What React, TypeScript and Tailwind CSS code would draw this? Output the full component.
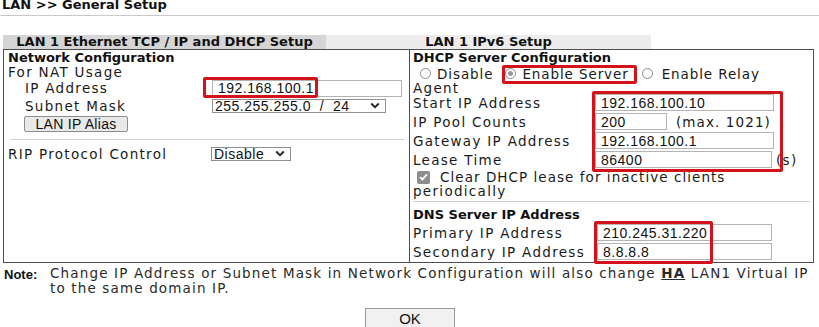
import React, { FC, ReactNode } from "react";

// --- small building blocks ---

const Field: FC<{ value?: string; className: string }> = ({ value, className }) => (
  <div
    className={`flex items-center border border-[#b4b4b4] bg-white pl-[5px] font-['Liberation_Sans',Arial,sans-serif] text-[14px] leading-none tracking-[0.5px] text-[#111] ${className}`}
  >
    {value}
  </div>
);

const Chevron = () => (
  <svg width="10" height="7" viewBox="0 0 10 7" className="shrink-0">
    <path d="M1.2 1.5 5 5.2 8.8 1.5" fill="none" stroke="#222" strokeWidth="1.8" />
  </svg>
);

const Select: FC<{ value: string; className: string }> = ({ value, className }) => (
  <div
    className={`flex items-center justify-between border border-[#8f8f8f] bg-white pl-[2px] pr-[5px] font-['Liberation_Sans',Arial,sans-serif] text-[14px] leading-none tracking-[0.5px] text-[#111] ${className}`}
  >
    <span>{value}</span>
    <Chevron />
  </div>
);

const Radio: FC<{ checked?: boolean }> = ({ checked }) => (
  <span className="flex h-[11px] w-[11px] shrink-0 items-center justify-center rounded-full border border-[#8a8a8a] bg-white">
    {checked && <span className="h-[5px] w-[5px] rounded-full bg-[#9a9a9a]" />}
  </span>
);

const RedBox: FC<{ className: string }> = ({ className }) => (
  <div className={`pointer-events-none absolute rounded-[2px] border-[3px] border-[#d4121a] ${className}`} />
);

const Label: FC<{ children: ReactNode; className?: string; track?: string }> = ({
  children,
  className = "",
  track = "tracking-[1.3px]",
}) => (
  <div
    className={`font-['DejaVu_Sans',Verdana,sans-serif] text-[13.5px] leading-[12px] text-[#1a1a1a] ${track} ${className}`}
  >
    {children}
  </div>
);

const heading =
  "font-['DejaVu_Sans',Verdana,sans-serif] text-[13px] font-bold leading-[12px] text-[#111]";

// --- main ---

export default function App() {
  return (
    <div className="relative h-[327px] w-[819px] overflow-hidden bg-white">
      {/* page title */}
      <div className="h-[18px] border-b border-[#c9c9c9]">
        <div className="mt-[-2px] pl-[2px] font-['DejaVu_Sans',Verdana,sans-serif] text-[13px] font-bold leading-[13px] text-[#111]">
          LAN &gt;&gt; General Setup
        </div>
      </div>

      {/* tabs */}
      <div className="mt-[19px] flex h-[14px] pl-[3px]">
        <div className={`flex w-[323px] items-center justify-center bg-[#d5d5d5] ${heading}`}>
          LAN 1 Ethernet TCP / IP and DHCP Setup
        </div>
        <div className={`flex w-[325px] items-center justify-center bg-[#ececec] ${heading}`}>
          LAN 1 IPv6 Setup
        </div>
      </div>

      {/* panel */}
      <div className="relative ml-[3px] flex h-[214px] w-[811px] border border-[#4d4d4d]">
        {/* left column */}
        <div className="w-[406px] border-r border-[#4d4d4d] pl-[4px]">
          <div className={`flex h-[15px] items-center ${heading}`}>Network Configuration</div>
          <Label className="flex h-[14px] items-center">For NAT Usage</Label>
          <div className="flex h-[18px] items-center">
            <Label className="w-[204px] pl-[17px]">IP Address</Label>
            <Field value="192.168.100.1" className="h-[17px] w-[190px]" />
          </div>
          <div className="flex h-[17px] items-center">
            <Label className="w-[204px] pl-[17px]">Subnet Mask</Label>
            <Select value={"255.255.255.0\u00a0\u00a0/\u00a0\u00a024"} className="h-[14px] w-[174px]" />
          </div>
          <div className="h-[19px] pl-[16px] pt-[2px]">
            <button className="flex h-[16px] w-[104px] items-center justify-center rounded-[2px] border border-[#8c8c8c] bg-[#e9e9e9] font-['Liberation_Sans',Arial,sans-serif] text-[14px] leading-none tracking-[0.3px] text-[#111]">
              LAN IP Alias
            </button>
          </div>
          <div className="ml-[3px] mr-[5px] mt-[6px] border-t border-[#cfcfcf]" />
          <div className="mt-[6px] flex h-[15px] items-center">
            <Label className="w-[203px]">RIP Protocol Control</Label>
            <Select value="Disable" className="h-[14px] w-[80px]" />
          </div>
        </div>

        {/* right column */}
        <div className="flex-1 pl-[3px]">
          <div className={`flex h-[15px] items-center ${heading}`}>DHCP Server Configuration</div>
          <div className="flex h-[17px] items-center pl-[7px]">
            <Radio />
            <Label className="ml-[6px]" track="tracking-[0.9px]">
              Disable
            </Label>
            <span className="ml-[12px]">
              <Radio checked />
            </span>
            <Label className="ml-[6px]" track="tracking-[0.9px]">
              Enable Server
            </Label>
            <span className="ml-[13px]">
              <Radio />
            </span>
            <Label className="ml-[9px]" track="tracking-[0.9px]">
              Enable Relay
            </Label>
          </div>
          <Label className="flex h-[12px] items-center">Agent</Label>

          <div className="flex h-[19px] items-start">
            <Label className="flex h-[17px] w-[182px] items-center">Start IP Address</Label>
            <Field value="192.168.100.10" className="h-[17px] w-[179px]" />
          </div>
          <div className="flex h-[19px] items-start">
            <Label className="flex h-[17px] w-[182px] items-center">IP Pool Counts</Label>
            <Field value="200" className="h-[17px] w-[72px]" />
            <Label className="ml-[9px] flex h-[17px] items-center" track="tracking-[1.1px]">
              (max. 1021)
            </Label>
          </div>
          <div className="flex h-[19px] items-start">
            <Label className="flex h-[17px] w-[182px] items-center">Gateway IP Address</Label>
            <Field value="192.168.100.1" className="h-[17px] w-[179px]" />
          </div>
          <div className="flex h-[19px] items-start">
            <Label className="flex h-[17px] w-[182px] items-center">Lease Time</Label>
            <Field value="86400" className="h-[17px] w-[177px]" />
            <Label className="ml-[4px] flex h-[17px] items-center">(s)</Label>
          </div>

          <div className="flex h-[14px] items-center pl-[4px]">
            <span className="flex h-[13px] w-[13px] items-center justify-center rounded-[2px] bg-[#8d8d8d]">
              <svg width="9" height="8" viewBox="0 0 9 8">
                <path d="M1 4.2 3.4 6.4 8 1.4" fill="none" stroke="#fff" strokeWidth="1.8" />
              </svg>
            </span>
            <Label className="ml-[10px]" track="tracking-[1.05px]">
              Clear DHCP lease for inactive clients
            </Label>
          </div>
          <Label className="flex h-[13px] items-center">periodically</Label>
          <div className="mr-[3px] mt-[4px] border-t border-[#cfcfcf]" />

          <div className={`mt-[5px] flex h-[16px] items-center ${heading}`}>DNS Server IP Address</div>
          <div className="flex h-[19px] items-start pt-[1px]">
            <Label className="flex h-[17px] w-[184px] items-center">Primary IP Address</Label>
            <Field value="210.245.31.220" className="h-[17px] w-[175px]" />
          </div>
          <div className="flex h-[19px] items-start pt-[1px]">
            <Label className="flex h-[17px] w-[184px] items-center">Secondary IP Address</Label>
            <Field value="8.8.8.8" className="h-[17px] w-[175px]" />
          </div>
        </div>

        {/* annotation boxes */}
        <RedBox className="left-[199px] top-[27px] h-[21px] w-[115px]" />
        <RedBox className="left-[498px] top-[15px] h-[19px] w-[135px]" />
        <RedBox className="left-[588px] top-[41px] h-[81px] w-[191px]" />
        <RedBox className="left-[590px] top-[171px] h-[43px] w-[119px]" />
      </div>

      {/* note */}
      <div className="mt-[3px] flex pl-[4px]">
        <div className="w-[46px] shrink-0 pt-[1px] font-['Liberation_Sans',Arial,sans-serif] text-[13px] font-bold leading-[15px] text-[#111]">
          Note:
        </div>
        <div className="font-['DejaVu_Sans',Verdana,sans-serif] text-[13.5px] leading-[15px] tracking-[1.15px] text-[#2a2a2a]">
          Change IP Address or Subnet Mask in Network Configuration will also change{" "}
          <span className="font-bold underline">HA</span> LAN1 Virtual IP
          <br />
          to the same domain IP.
        </div>
      </div>

      {/* ok */}
      <div className="mt-[12px] flex justify-center pl-[1px]">
        <button className="flex h-[20px] w-[90px] items-center justify-center border border-[#9a9a9a] bg-[#f1f1f1] font-['Liberation_Sans',Arial,sans-serif] text-[15px] leading-none text-[#111]">
          OK
        </button>
      </div>
    </div>
  );
}
